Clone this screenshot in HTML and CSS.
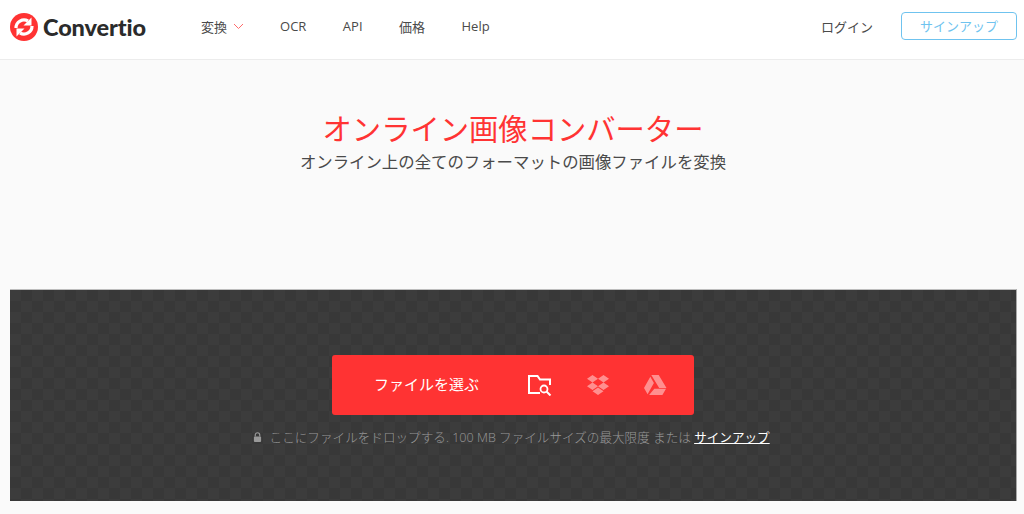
FILE: index.html
```html
<!DOCTYPE html>
<html lang="ja">
<head>
    <meta charset="UTF-8">
    <meta name="viewport" content="width=device-width, initial-scale=1.0">
    <title>オンライン画像コンバーター</title>
    <link rel="stylesheet" href="styles.css">
</head>
<body>
    <header class="topbar">
        <a class="logo" href="#">
            <svg class="logo-icon" viewBox="0 0 28 28">
                <circle cx="14" cy="14" r="14" fill="#ff3333"/>
                <path d="M6 15a8 8 0 0 1 12-7" fill="none" stroke="#fff" stroke-width="3.2"/>
                <path d="M21.500 4.500v8h-8z" fill="#fff"/>
                <path d="M22 13a8 8 0 0 1-12 7" fill="none" stroke="#fff" stroke-width="3.2"/>
                <path d="M6.500 23.500v-8h8z" fill="#fff"/>
            </svg>
            <span class="logo-text">Convertio</span>
        </a>
        <nav class="main-nav">
            <a href="#" class="nav-convert">変換
                <svg class="chevron" viewBox="0 0 11 7"><path d="M1 1l4.500 4.500L10 1" fill="none" stroke="#ff6b6b" stroke-width="1"/></svg>
            </a>
            <a href="#">OCR</a>
            <a href="#">API</a>
            <a href="#">価格</a>
            <a href="#">Help</a>
        </nav>
        <div class="account">
            <a href="#" class="login">ログイン</a>
            <a href="#" class="signup">サインアップ</a>
        </div>
    </header>

    <section class="hero">
        <h1>オンライン画像コンバーター</h1>
        <p>オンライン上の全てのフォーマットの画像ファイルを変換</p>
    </section>

    <section class="dropzone">
        <div class="choose-bar">
            <span class="choose-label">ファイルを選ぶ</span>
            <div class="sources">
                <!-- folder search -->
                <svg class="source-icon" viewBox="0 0 24 22">
                    <path d="M1 20V2h8.500l2.500 3.500h10V11" fill="none" stroke="#fff" stroke-width="2"/>
                    <path d="M1 19h11" fill="none" stroke="#fff" stroke-width="2"/>
                    <circle cx="16" cy="15" r="3.500" fill="none" stroke="#fff" stroke-width="1.800"/>
                    <path d="M18.500 17.500l4 4" stroke="#fff" stroke-width="2"/>
                </svg>
                <!-- dropbox -->
                <svg class="source-icon faded" viewBox="0 0 24 22">
                    <path d="M6.500 1L1 4.800l5.500 3.700L12 4.800zM17.500 1L12 4.800l5.500 3.700L23 4.800zM1 12.200l5.500 3.700 5.500-3.700-5.500-3.700zM17.500 8.500L12 12.200l5.500 3.700 5.500-3.700zM6.500 17.200l5.500 3.800 5.500-3.800-5.500-3.700z" fill="#fff"/>
                </svg>
                <!-- drive -->
                <svg class="source-icon faded" viewBox="0 0 24 22">
                    <path d="M8.300 1h7.400l7.800 13h-7.300zM7.300 2.700l3.600 6.300L4.600 20.300 1 14zM11.300 14.800h11.700L19.400 21H6.100z" fill="#fff"/>
                </svg>
            </div>
        </div>
        <p class="drop-note">
            <svg class="lock" viewBox="0 0 10 11"><path d="M2.500 5V3.300a2.500 2.500 0 0 1 5 0V5" fill="none" stroke="#999" stroke-width="1.300"/><rect x="1" y="5" width="8" height="6" rx="1" fill="#999"/></svg>
            ここにファイルをドロップする. 100 MB ファイルサイズの最大限度 または <a href="#">サインアップ</a>
        </p>
    </section>
</body>
</html>
```

FILE: styles.css
```css
body {
    font-family: "Open Sans", "Noto Sans CJK JP", sans-serif;
    margin: 0;
    padding: 0;
    background-color: #fafafa;
    color: #4a4a4a;
    overflow: hidden;
}
a {
    text-decoration: none;
    color: inherit;
}
.topbar {
    display: flex;
    align-items: center;
    height: 59px;
    background-color: white;
    border-bottom: 1px solid #ececec;
    padding: 0 7px 0 10px;
}
.logo {
    display: flex;
    align-items: center;
    gap: 5px;
    width: 190px;
    margin-bottom: 6px;
}
.logo-icon {
    width: 28px;
    height: 28px;
}
.logo-text {
    font-family: "Lato", sans-serif;
    font-size: 23.5px;
    font-weight: 900;
    color: #2b2b2b;
    letter-spacing: -0.1px;
}
.main-nav {
    display: flex;
    align-items: center;
    gap: 36.5px;
    margin-left: 1px;
    margin-bottom: 7px;
    font-size: 13px;
}
.nav-convert {
    display: flex;
    align-items: center;
    gap: 5.5px;
}
.chevron {
    width: 11px;
    height: 7px;
}
.account {
    display: flex;
    align-items: center;
    gap: 28px;
    margin-left: auto;
    margin-bottom: 7px;
    font-size: 13px;
}
.signup {
    width: 114px;
    height: 26px;
    line-height: 26px;
    text-align: center;
    border: 1px solid #6fc3ef;
    border-radius: 4px;
    color: #6fc3ef;
}
.hero {
    height: 229px;
    padding-left: 2px;
    text-align: center;
}
.hero h1 {
    margin: 0;
    padding-top: 49px;
    font-size: 29.3px;
    font-weight: 400;
    line-height: 40px;
    color: #ff3333;
}
.hero p {
    margin: 2px 0 0;
    font-size: 16.4px;
    line-height: 22px;
    color: #4a4a4a;
}
.dropzone {
    height: 212px;
    margin: 0 7px 0 10px;
    padding-top: 65px;
    box-sizing: border-box;
    border-top: 1px solid #bdbdbd;
    border-right: 1px solid #a8a8a8;
    background-color: #3c3c3c;
    background-image: conic-gradient(#383838 25%, transparent 0 50%, #383838 0 75%, transparent 0);
    background-size: 22px 22px;
}
.choose-bar {
    display: flex;
    align-items: center;
    width: 362px;
    height: 60px;
    margin: 0 auto;
    box-sizing: border-box;
    padding-left: 42px;
    background-color: #ff3333;
    border-radius: 3px;
    color: white;
}
.choose-label {
    width: 154px;
    padding-bottom: 3px;
    font-size: 15px;
}
.sources {
    display: flex;
    gap: 33.5px;
}
.source-icon {
    flex-shrink: 0;
    width: 24px;
    height: 22px;
}
.faded {
    opacity: 0.45;
}
.drop-note {
    margin: 12px 3px 0 0;
    text-align: center;
    font-size: 12.6px;
    font-weight: 300;
    color: #999;
}
.drop-note a {
    color: white;
    font-weight: 400;
    text-decoration: underline;
}
.lock {
    width: 9px;
    height: 10px;
    margin-right: 4px;
}
```
